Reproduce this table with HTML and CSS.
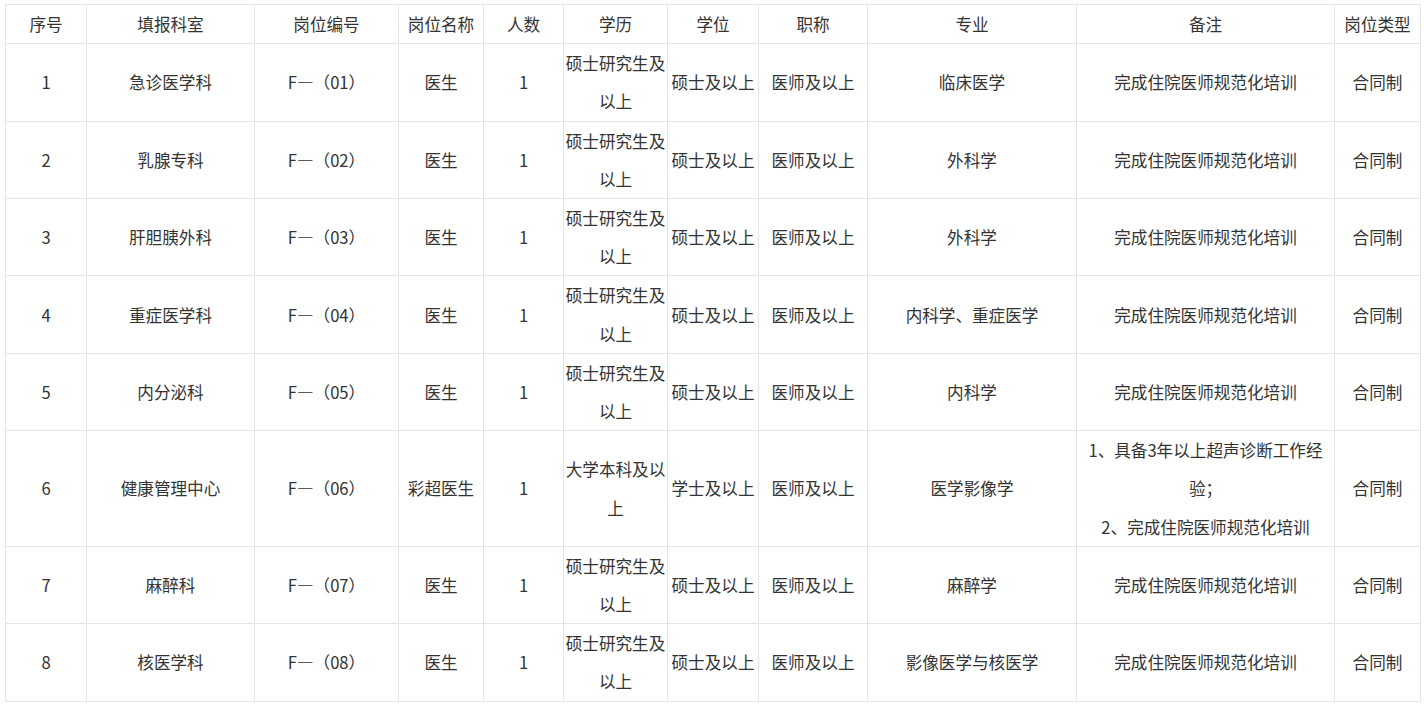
FILE: index.html
```html
<!DOCTYPE html>
<html lang="zh-CN">
<head>
<meta charset="utf-8">
<title>岗位表</title>
<link rel="stylesheet" href="styles.css">
</head>
<body>
<div class="wrap">
<table class="jobs">
<colgroup>
<col class="c1"><col class="c2"><col class="c3"><col class="c4"><col class="c5"><col class="c6"><col class="c7"><col class="c8"><col class="c9"><col class="c10"><col class="c11">
</colgroup>
<thead>
<tr><th>序号</th><th>填报科室</th><th>岗位编号</th><th>岗位名称</th><th>人数</th><th>学历</th><th>学位</th><th>职称</th><th>专业</th><th>备注</th><th>岗位类型</th></tr>
</thead>
<tbody>
<tr><td>1</td><td>急诊医学科</td><td>F—（01）</td><td>医生</td><td>1</td><td>硕士研究生及以上</td><td>硕士及以上</td><td>医师及以上</td><td>临床医学</td><td>完成住院医师规范化培训</td><td>合同制</td></tr>
<tr><td>2</td><td>乳腺专科</td><td>F—（02）</td><td>医生</td><td>1</td><td>硕士研究生及以上</td><td>硕士及以上</td><td>医师及以上</td><td>外科学</td><td>完成住院医师规范化培训</td><td>合同制</td></tr>
<tr><td>3</td><td>肝胆胰外科</td><td>F—（03）</td><td>医生</td><td>1</td><td>硕士研究生及以上</td><td>硕士及以上</td><td>医师及以上</td><td>外科学</td><td>完成住院医师规范化培训</td><td>合同制</td></tr>
<tr><td>4</td><td>重症医学科</td><td>F—（04）</td><td>医生</td><td>1</td><td>硕士研究生及以上</td><td>硕士及以上</td><td>医师及以上</td><td>内科学、重症医学</td><td>完成住院医师规范化培训</td><td>合同制</td></tr>
<tr><td>5</td><td>内分泌科</td><td>F—（05）</td><td>医生</td><td>1</td><td>硕士研究生及以上</td><td>硕士及以上</td><td>医师及以上</td><td>内科学</td><td>完成住院医师规范化培训</td><td>合同制</td></tr>
<tr><td>6</td><td>健康管理中心</td><td>F—（06）</td><td>彩超医生</td><td>1</td><td>大学本科及以上</td><td>学士及以上</td><td>医师及以上</td><td>医学影像学</td><td>1、具备3年以上超声诊断工作经验；<br>2、完成住院医师规范化培训</td><td>合同制</td></tr>
<tr><td>7</td><td>麻醉科</td><td>F—（07）</td><td>医生</td><td>1</td><td>硕士研究生及以上</td><td>硕士及以上</td><td>医师及以上</td><td>麻醉学</td><td>完成住院医师规范化培训</td><td>合同制</td></tr>
<tr><td>8</td><td>核医学科</td><td>F—（08）</td><td>医生</td><td>1</td><td>硕士研究生及以上</td><td>硕士及以上</td><td>医师及以上</td><td>影像医学与核医学</td><td>完成住院医师规范化培训</td><td>合同制</td></tr>
</tbody>
</table>
</div>
</body>
</html>
```
FILE: styles.css
```css
html, body {
  margin: 0;
  padding: 0;
  background: #ffffff;
}
.wrap {
  padding: 4px 0 0 5px;
}
.jobs {
  border-collapse: collapse;
  table-layout: fixed;
  width: 1415px;
  font-family: "Noto Sans CJK SC", "Microsoft YaHei", sans-serif;
  font-size: 16.6px;
  line-height: 38.2px;
  color: #333333;
}
.jobs th, .jobs td {
  border: 1px solid #e5e5e5;
  padding: 0 1px;
  text-align: center;
  vertical-align: middle;
  font-weight: normal;
  word-break: break-all;
}
.c1 { width: 81px; }
.c2 { width: 168px; }
.c3 { width: 144px; }
.c4 { width: 85px; }
.c5 { width: 80px; }
.c6 { width: 104px; }
.c7 { width: 91px; }
.c8 { width: 109px; }
.c9 { width: 209px; }
.c10 { width: 258px; }
.c11 { width: 86px; }
```
